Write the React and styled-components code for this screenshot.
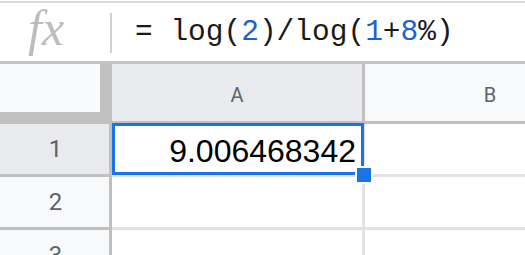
import React from 'react'
import styled, { createGlobalStyle } from 'styled-components'

const GlobalStyle = createGlobalStyle`
  html, body {
    margin: 0;
    padding: 0;
    background: #fff;
  }
`

const Page = styled.div`
  width: 525px;
  height: 255px;
  overflow: hidden;
  background: #fff;
`

const FormulaBar = styled.div`
  margin-top: 1px;
  border-top: 2px solid #dadada;
  border-bottom: 3px solid #c4c4c4;
  height: 58px;
  display: flex;
  align-items: flex-start;
`

const FxIcon = styled.span`
  width: 110px;
  padding-left: 28px;
  box-sizing: border-box;
  font-family: "Liberation Serif", serif;
  font-style: italic;
  font-size: 50px;
  line-height: 50px;
  color: #bdbdbd;
`

const Divider = styled.div`
  width: 2px;
  height: 40px;
  margin-top: 10px;
  background: #d0d0d0;
`

const FormulaText = styled.div`
  margin-top: 12px;
  padding-left: 23px;
  font-family: "Liberation Mono", monospace;
  font-size: 29.5px;
  line-height: 34px;
  color: #1a1a1a;
  white-space: pre;
`

const Num = styled.span`
  color: #1a62d2;
`

const Sheet = styled.div`
  display: grid;
  grid-template-columns: 112px 253px 253px;
  grid-template-rows: 60px 53px 53px 53px;
`

const Corner = styled.div`
  box-sizing: border-box;
  background: #f8f9fa;
  border-right: 12px solid #c0c0c0;
  border-bottom: 12px solid #c0c0c0;
`

const ColHeader = styled.div`
  box-sizing: border-box;
  background: ${({ $active }) => ($active ? '#e8eaed' : '#f8f9fa')};
  border-right: 3px solid #c0c0c0;
  border-bottom: 3px solid #c0c0c0;
  display: flex;
  align-items: center;
  justify-content: center;
  padding-top: 5px;
  font-family: Roboto, "Liberation Sans", sans-serif;
  font-size: 20px;
  color: #5f6368;
`

const RowHeader = styled.div`
  box-sizing: border-box;
  background: ${({ $active }) => ($active ? '#e8eaed' : '#f8f9fa')};
  border-right: 3px solid #c0c0c0;
  border-bottom: 3px solid #c0c0c0;
  display: flex;
  align-items: center;
  justify-content: center;
  padding-left: 2px;
  font-family: Roboto, "Liberation Sans", sans-serif;
  font-size: 24px;
  color: #5f6368;
`

const Cell = styled.div`
  position: relative;
  box-sizing: border-box;
  border-right: 3px solid #e2e2e2;
  border-bottom: 3px solid #e2e2e2;
  display: flex;
  align-items: center;
  justify-content: flex-end;
  padding: 5px 6px 0 0;
  font-family: "Liberation Sans", Arial, sans-serif;
  font-size: 32px;
  color: #000;
`

const Selection = styled.div`
  position: absolute;
  z-index: 1;
  left: 0;
  top: -1px;
  width: 252px;
  height: 52px;
  box-sizing: border-box;
  border: 3px solid #1a73e8;
  pointer-events: none;
`

const FillHandle = styled.div`
  position: absolute;
  z-index: 2;
  left: 243px;
  top: 42px;
  width: 14px;
  height: 14px;
  background: #1a73e8;
  border: 2px solid #fff;
`

const rows = [
  { n: 1, a: '9.006468342', active: true },
  { n: 2, a: '' },
  { n: 3, a: '' },
]

const App = () => {
  return (
    <>
      <GlobalStyle />
      <Page>
        <FormulaBar>
          <FxIcon>fx</FxIcon>
          <Divider />
          <FormulaText>
            = log(<Num>2</Num>)/log(<Num>1</Num>+<Num>8</Num>%)
          </FormulaText>
        </FormulaBar>
        <Sheet>
          <Corner />
          <ColHeader $active>A</ColHeader>
          <ColHeader>B</ColHeader>
          {rows.map((row) => (
            <React.Fragment key={row.n}>
              <RowHeader $active={row.active}>{row.n}</RowHeader>
              <Cell>
                {row.a}
                {row.active && (
                  <>
                    <Selection />
                    <FillHandle />
                  </>
                )}
              </Cell>
              <Cell />
            </React.Fragment>
          ))}
        </Sheet>
      </Page>
    </>
  )
}

export default App
